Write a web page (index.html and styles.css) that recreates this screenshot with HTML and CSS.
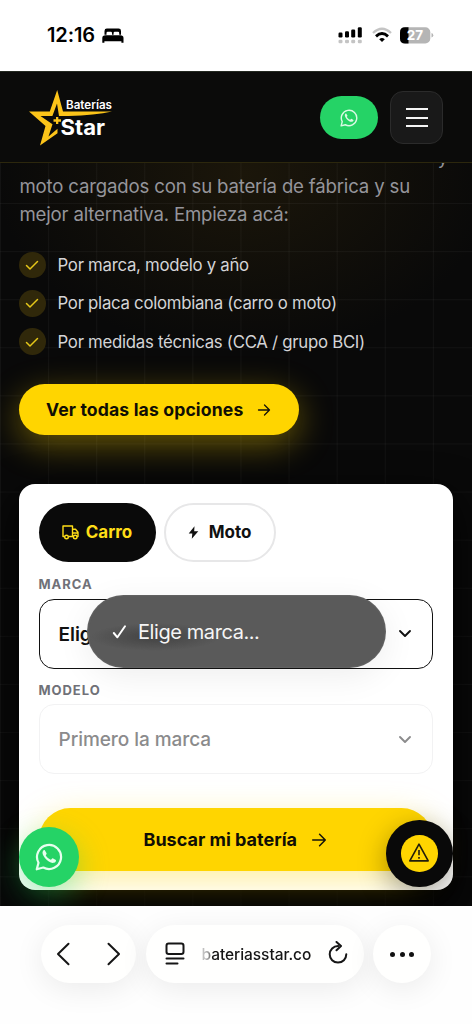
FILE: index.html
```html
<!DOCTYPE html>
<html lang="es">
<head>
<meta charset="utf-8">
<meta name="viewport" content="width=device-width, initial-scale=1">
<title>Baterías Star</title>
<link rel="stylesheet" href="styles.css">
</head>
<body>
<div class="phone">
  <div class="status">
    <div class="status-left">
      <span class="clock">12:16</span>
      <svg class="bed" width="22" height="16" viewBox="0 0 22 16"><path d="M2.500 6.700V3Q2.500.6 4.900.6H16.600Q19 .6 19 3V6.700H17.200V5Q17.200 3.800 16 3.800H12.800Q11.600 3.800 11.600 5V6.700H10V5Q10 3.800 8.800 3.800H5.700Q4.500 3.800 4.500 5V6.700Z"/><path d="M3.500 7.200H18.200Q21.500 7.200 21.500 10V14.800H19.400V13.200H2.400V14.800H.3V10Q.3 7.200 3.500 7.200Z"/></svg>
    </div>
    <div class="status-right">
      <svg width="25" height="17" viewBox="0 0 25 17"><rect x=".5" y="5.500" width="4" height="5" rx="1.200"/><rect x="7" y="4.300" width="4" height="6.200" rx="1.200"/><rect x="13.200" y="2.500" width="4" height="8" rx="1.200"/><rect x="19.800" y=".3" width="4" height="10.200" rx="1.200"/><g fill="#c4c4c4"><rect x=".5" y="12.700" width="4" height="3.600" rx="1.200"/><rect x="7" y="12.700" width="4" height="3.600" rx="1.200"/><rect x="13.200" y="12.700" width="4" height="3.600" rx="1.200"/><rect x="19.800" y="12.700" width="4" height="3.600" rx="1.200"/></g></svg>
      <svg width="20" height="16" viewBox="0 0 20 16" fill="none" stroke-width="2.900"><path d="M1 6Q10-2.500 19 6" stroke="#c4c4c4" stroke-width="2.300"/><path d="M4 9.300Q10 3.900 16 9.300" stroke="#000"/><path d="M7.200 12.200Q10 9.900 12.800 12.200L10 15Z" fill="#000"/></svg>
      <svg width="34" height="17" viewBox="0 0 34 17"><rect x="0" y=".3" width="30.300" height="16.200" rx="5" fill="#b5b5b5"/><path d="M8.500.3H5Q0 .3 0 5.300V11.500Q0 16.500 5 16.500H8.500Z"/><path d="M31.500 6Q33.300 6.500 33.300 8.300T31.500 10.600Z" fill="#b5b5b5"/><text x="6.700" y="13.300" class="battery-text" textLength="16.500">27</text></svg>
    </div>
  </div>

  <header class="header">
    <svg class="logo" width="88" height="60" viewBox="0 0 88 60">
      <path fill="#fcc419" d="M28.200 2L34 23.600H83Q66 27.500 39.500 28.100H30L28 15.500L23.400 28.100H11.500L23.500 36.200L19.500 48.500L28.500 40.800V45.300L11 57.500L16.500 38.100L0 23.400H20.800Z"/>
      <path fill="#fcc419" d="M27 29H29.300V31.300H32V33.700H29.300V36H27V33.700H24.500V31.300H27Z"/>
      <text x="37" y="21.300" class="logo-small" textLength="46" lengthAdjust="spacingAndGlyphs">Baterías</text>
      <text x="31.500" y="47" class="logo-large" textLength="44.500" lengthAdjust="spacingAndGlyphs">Star</text>
    </svg>
    <div class="header-actions">
      <button class="wa-pill" aria-label="WhatsApp"><svg width="18" height="18"><use href="#wa"/></svg></button>
      <button class="menu-button" aria-label="Menú"><i></i><i></i><i></i></button>
    </div>
  </header>

  <main class="hero">
    <p class="intro"><span class="intro-tail">y</span><span class="line">moto cargados con su batería de fábrica y su</span><span class="line">mejor alternativa. Empieza acá:</span></p>
    <ul class="checks">
      <li><b><svg width="14" height="12" viewBox="0 0 14 12"><path d="M1.500 6.500L5 10L12.500 2.500"/></svg></b><span>Por marca, modelo y año</span></li>
      <li><b><svg width="14" height="12" viewBox="0 0 14 12"><path d="M1.500 6.500L5 10L12.500 2.500"/></svg></b><span>Por placa colombiana (carro o moto)</span></li>
      <li><b><svg width="14" height="12" viewBox="0 0 14 12"><path d="M1.500 6.500L5 10L12.500 2.500"/></svg></b><span>Por medidas técnicas (CCA / grupo BCI)</span></li>
    </ul>
    <button class="cta"><span>Ver todas las opciones</span><svg class="arrow" width="14" height="14" viewBox="0 0 14 14"><path d="M1.500 7H12.500M7.500 2L12.500 7L7.500 12"/></svg></button>

    <section class="card">
      <div class="tabs">
        <button class="tab tab-on"><svg width="17" height="15" viewBox="0 0 17 15" fill="none" stroke="currentColor" stroke-width="1.400" stroke-linejoin="round"><path d="M2.500 11.500H1V1H10.500V11.500H6.500M10.500 4.300H13.500L16 7.300V11.500H15M10.500 11.500H11.500M10.500 8H16"/><circle cx="4.500" cy="12" r="1.800"/><circle cx="13.200" cy="12" r="1.800"/></svg><span>Carro</span></button>
        <button class="tab tab-off"><svg width="11" height="13" viewBox="0 0 11 13" fill="currentColor"><path d="M6.500.2L.7 7.500H4.300L3.800 12.800L10.300 5.200H6.200Z"/></svg><span>Moto</span></button>
      </div>
      <label class="label label-marca">MARCA</label>
      <div class="field-wrap">
        <div class="select select-on"><span>Elige marca...</span><svg width="14" height="10" viewBox="0 0 14 10"><path d="M2 2L7 7L12 2"/></svg></div>
        <div class="popover"><svg width="16" height="16" viewBox="0 0 16 16"><path d="M1.800 9L5.400 13.300L13 2.300"/></svg><span>Elige marca...</span></div>
      </div>
      <label class="label label-modelo">MODELO</label>
      <div class="select select-off"><span>Primero la marca</span><svg width="14" height="10" viewBox="0 0 14 10"><path d="M2 2L7 7L12 2"/></svg></div>
      <button class="submit"><span>Buscar mi batería</span><svg class="arrow" width="16" height="16" viewBox="0 0 14 14"><path d="M1.500 7H12.500M7.500 2L12.500 7L7.500 12"/></svg></button>
    </section>

    <button class="float-wa" aria-label="WhatsApp"><svg width="28" height="28"><use href="#wa"/></svg></button>
    <button class="float-alert" aria-label="Alerta"><b><svg width="22" height="20" viewBox="0 0 22 20"><path d="M11 1.200L20.200 17.900H1.800Z"/><path d="M11 7V12.200M11 14V15.800"/></svg></b></button>
  </main>

  <nav class="browser-bar">
    <div class="pill nav-pill">
      <svg width="14" height="24" viewBox="0 0 14 24"><path d="M12.500 1.700L2 12L12.500 22.300"/></svg>
      <svg width="14" height="24" viewBox="0 0 14 24"><path d="M1.500 1.700L12 12L1.500 22.300"/></svg>
    </div>
    <div class="pill url-pill">
      <svg width="20" height="24" viewBox="0 0 20 24"><rect x="1.500" y="1.500" width="17" height="10.500" rx="2.200"/><path d="M1.500 16.500H18.500M1.500 21.500H12.500"/></svg>
      <span class="url">bateriasstar.co</span>
      <svg class="reload" width="22" height="24" viewBox="0 0 22 24"><path d="M11 5A8.300 8.300 0 1 0 19.300 13.300M9.500 1L14 5L9.500 9.300"/></svg>
    </div>
    <div class="pill more-pill"><i></i><i></i><i></i></div>
  </nav>
</div>

<svg class="defs" width="0" height="0">
  <symbol id="wa" viewBox="0 0 24 24">
    <path fill="none" stroke="currentColor" stroke-width="1.900" stroke-linejoin="round" d="M1.500 22.500L3 16.900A10.300 10.300 0 1 1 7.100 21Z"/>
    <path fill="currentColor" d="M8.400 6.200C8 5.900 7.300 6.100 6.900 6.700C5.900 8.100 6.500 10.400 8.500 12.900C10.900 15.900 14 17.600 16.100 17C17.500 16.600 18.300 15.300 17.900 14.500L15.200 13.100C14.600 12.900 14.100 14.300 13.600 14.400C12.400 14.300 9.500 11.700 9.200 10.600C9.200 10 10.200 9.500 9.900 8.700Z"/>
  </symbol>
</svg>
</body>
</html>
```
FILE: styles.css
```css
* { box-sizing: border-box; }
body { margin: 0; background: #fff; font-family: Inter, "Liberation Sans", sans-serif; }
button { border: 0; padding: 0; font: inherit; }
svg { display: block; flex: none; }
.defs { position: absolute; }
.phone { width: 472px; height: 1024px; display: flex; flex-direction: column; overflow: hidden; }
.line, .checks span, .cta span, .tab span, .select span, .popover span, .submit span, .url { white-space: nowrap; }

.status { height: 71px; flex: none; display: flex; justify-content: space-between; padding: 0 38px 0 47px; }
.status-left { display: flex; align-items: flex-start; padding-top: 23px; gap: 5px; }
.clock { font-size: 20px; font-weight: 600; line-height: 25px; width: 50px; letter-spacing: -.1px; white-space: nowrap; }
.bed { margin-top: 5px; }
.status-right { display: flex; align-items: flex-start; padding-top: 27px; gap: 8.500px; }
.battery-text { font: 700 13.500px Inter, sans-serif; fill: #fff; }

.header { height: 92px; flex: none; background: #0b0b0a; border-bottom: 1px solid #2c270d; border-top: 1px solid #232820; display: flex; justify-content: space-between; padding: 0 29px; }
.logo { margin-top: 16px; }
.logo-small { font: 600 11.500px Inter, sans-serif; fill: #fff; }
.logo-large { font: 700 21px Inter, sans-serif; fill: #fff; }
.header-actions { display: flex; align-items: center; gap: 12px; padding-top: 1px; }
.wa-pill { width: 58px; height: 43px; border-radius: 22px; background: #25d366; color: #d9f9e4; display: grid; place-items: center; }
.menu-button { width: 53px; height: 53px; border-radius: 13px; border: 1px solid #2b2b2b; background: #191919; display: flex; flex-direction: column; align-items: center; justify-content: center; gap: 6.500px; }
.menu-button i { width: 22px; height: 2px; background: #f4f4f4; }

.hero {
  position: relative; height: 743px; flex: none; overflow: hidden; padding: 0 19px;
  display: flex; flex-direction: column; align-items: flex-start;
  background:
    linear-gradient(90deg, #ffffff0a 1px, transparent 1px) 0 0 / 48.100px 48.100px,
    linear-gradient(#ffffff0a 1px, transparent 1px) 0 40px / 48.100px 48.100px,
    radial-gradient(ellipse 250px 180px at 245px 10px, #1b160a, transparent),
    #090909;
}
.intro { margin: -20px 0 0; padding-left: .5px; width: 429px; height: 86px; color: #95959b; font-size: 18.600px; letter-spacing: -.17px; line-height: 28.700px; }
.line { display: block; }
.intro-tail { display: block; text-align: right; }
.checks { list-style: none; margin: 23px 0 0; padding: 0; display: grid; gap: 12.300px; color: #d4d4d6; font-size: 16.800px; letter-spacing: -.28px; }
.checks li { height: 26px; display: flex; align-items: center; gap: 12px; }
.checks b { width: 26.500px; height: 26.500px; border-radius: 50%; background: #30280a; display: grid; place-items: center; }
.checks path { fill: none; stroke: #e5c719; stroke-width: 1.500; stroke-linecap: round; stroke-linejoin: round; }

.arrow path { fill: none; stroke: #15130a; stroke-width: 1.300; stroke-linecap: round; stroke-linejoin: round; }
.cta { margin-top: 29px; width: 279.500px; height: 51px; flex: none; border-radius: 26px; background: #ffd500; box-shadow: 0 10px 34px #ffd50062; color: #100e05; font-size: 17.600px; letter-spacing: .14px; font-weight: 700; display: flex; align-items: center; gap: 14px; padding: 1px 0 0 27px; }

.card { margin-top: 49px; width: 433.500px; height: 406px; flex: none; background: #fff; border-radius: 16px; padding: 19px 19.500px; display: flex; flex-direction: column; box-shadow: 0 15px 40px #000; }
.tabs { display: flex; gap: 8px; height: 59px; flex: none; }
.tab { border-radius: 30px; display: flex; align-items: center; justify-content: center; font-weight: 700; font-size: 17px; }
.tab-on { width: 117px; background: #0a0a0a; color: #ffde17; gap: 7px; }
.tab-off { width: 112px; background: #fff; border: 2.500px solid #e7e7e8; color: #111; gap: 10px; }
.label { color: #707178; font-size: 13px; font-weight: 700; letter-spacing: .950px; line-height: 16px; }
.label-marca { margin-top: 14.500px; }
.field-wrap { position: relative; margin-top: 6.500px; }
.select { height: 70px; width: 394.500px; flex: none; border-radius: 15px; display: flex; align-items: center; justify-content: space-between; padding: 1px 20px 0 19px; font-size: 19px; letter-spacing: -.05px; font-weight: 600; }
.select path { fill: none; stroke: currentColor; stroke-width: 1.900; stroke-linecap: round; stroke-linejoin: round; }
.select-on { border: 1.500px solid #111; color: #111; }
.popover { position: absolute; left: 48px; top: -4px; width: 299.500px; height: 73px; border-radius: 37px; background: radial-gradient(ellipse 65px 14px at 68px 42px, #424242, transparent), #5a5a5a; box-shadow: 0 8px 34px #00000012, inset 0 0 2px #777; color: #f5f5f5; display: flex; align-items: center; gap: 10.500px; padding: 1px 0 0 25px; font-size: 20px; letter-spacing: -.42px; }
.popover path { fill: none; stroke: #fff; stroke-width: 2; stroke-linecap: round; stroke-linejoin: round; }
.label-modelo { margin-top: 13px; }
.select-off { margin-top: 6.500px; border: 1.500px solid #f2f2f3; color: #8b8b8c; font-weight: 500; }
.submit { margin-top: 34px; height: 63px; flex: none; border-radius: 32px; background: #ffd500; box-shadow: 0 10px 34px #ffd50062; display: flex; align-items: center; gap: 14px; padding-left: 105px; color: #100e05; font-size: 18px; font-weight: 700; }

.float-wa { position: absolute; left: 19px; top: 664px; width: 60px; height: 60px; border-radius: 50%; background: #25d366; color: #e6ffee; display: grid; place-items: center; box-shadow: 0 10px 30px #25d36666; }
.float-alert { position: absolute; left: 386px; top: 657px; width: 66.500px; height: 66.500px; border-radius: 50%; background: #090909; display: grid; place-items: center; box-shadow: 0 8px 28px #00000059; }
.float-alert b { width: 36.500px; height: 36.500px; border-radius: 50%; background: #ffd500; display: grid; place-items: center; }
.float-alert path { fill: none; stroke: #211d0a; stroke-width: 1.600; stroke-linejoin: round; }

.browser-bar { flex: 1; background: #fefefe; display: flex; align-items: flex-start; padding: 19px 0 0 41px; gap: 9.500px; }
.pill { height: 58px; border-radius: 29px; background: #fffffe; box-shadow: 0 6px 30px #00000014; display: flex; align-items: center; }
.pill path, .pill rect { fill: none; stroke: #161616; stroke-width: 2; stroke-linecap: round; stroke-linejoin: round; }
.nav-pill { width: 95px; justify-content: space-between; padding: 0 15px; }
.url-pill { width: 218px; padding-left: 19px; }
.url { margin-left: 17px; width: 110px; font-size: 15.500px; font-weight: 500; letter-spacing: -.05px; background: linear-gradient(90deg, #ccc 0, #999 7px, #151515 10px); -webkit-background-clip: text; background-clip: text; color: transparent; }
.reload { margin-left: 15.500px; margin-top: -3px; }
.more-pill { width: 58px; justify-content: center; gap: 4.500px; }
.more-pill i { width: 5px; height: 5px; border-radius: 50%; background: #111; }
```
